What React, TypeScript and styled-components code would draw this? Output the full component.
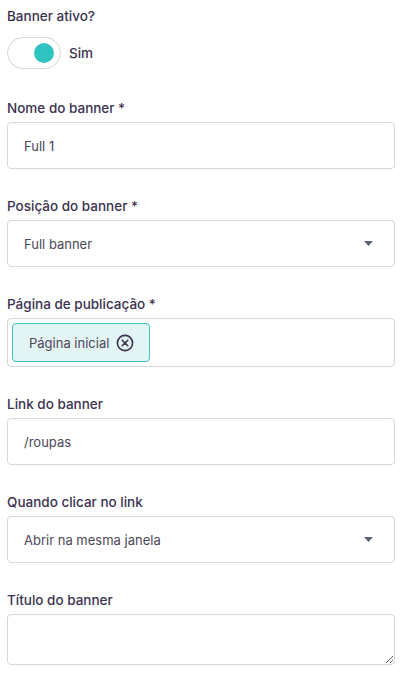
import React from "react";
import styled, { createGlobalStyle } from "styled-components";

const Global = createGlobalStyle`
  * { box-sizing: border-box; }
  html, body { margin: 0; padding: 0; background: #ffffff; }
  body { font-family: Inter, "Noto Sans", sans-serif; -webkit-font-smoothing: antialiased; }
`;

const Page = styled.form`
  display: flex;
  flex-direction: column;
  gap: 29px;
  padding: 8px 7px 8px 7px;
  width: 402px;
`;

const Field = styled.div`
  display: flex;
  flex-direction: column;
`;

const Label = styled.label`
  font-size: 13.5px;
  line-height: 16px;
  font-weight: 500;
  color: #3b3250;
  margin: 0 0 6px 0;
`;

const ToggleRow = styled.div`
  display: flex;
  align-items: center;
  gap: 8px;
  padding: 7px 0 2px 0;
`;

const Toggle = styled.div<{ $on: boolean }>`
  width: 54px;
  height: 32px;
  border: 1px solid #d6d6d9;
  border-radius: 16px;
  background: #ffffff;
  display: flex;
  align-items: center;
  justify-content: ${(p) => (p.$on ? "flex-end" : "flex-start")};
  padding: 0 6px;
`;

const Knob = styled.span`
  width: 20px;
  height: 20px;
  border-radius: 50%;
  background: #2fc4bf;
`;

const ToggleText = styled.span`
  font-size: 13.5px;
  font-weight: 500;
  color: #3b3250;
`;

const Box = styled.div`
  height: 47px;
  width: 388px;
  border: 1px solid #d5d7dc;
  border-radius: 4px;
  background: #fff;
  display: flex;
  align-items: center;
  justify-content: space-between;
  padding: 0 21px 0 16px;
  font-size: 13px;
  color: #4d4759;
`;

const TextInput = styled.input`
  height: 47px;
  width: 388px;
  border: 1px solid #d5d7dc;
  border-radius: 4px;
  background: #fff;
  padding: 0 16px;
  font-family: inherit;
  font-size: 13px;
  color: #4d4759;
  outline: none;
`;

const TextArea = styled.textarea`
  height: 51px;
  width: 388px;
  border: 1px solid #d5d7dc;
  border-radius: 4px;
  padding: 8px 16px;
  font-family: inherit;
  font-size: 13px;
  color: #4d4759;
  outline: none;
  display: block;
`;

const MultiBox = styled.div`
  height: 49px;
  width: 388px;
  border: 1px solid #d5d7dc;
  border-radius: 4px;
  display: flex;
  align-items: center;
  padding: 0 4px;
`;

const Chip = styled.div`
  height: 39px;
  display: flex;
  align-items: center;
  gap: 7px;
  padding: 0 15px 0 16px;
  background: #e3f4f5;
  border: 1px solid #3cc6c4;
  border-radius: 4px;
  font-size: 13px;
  color: #4d4759;
`;

const Arrow = () => (
  <svg width="9" height="5" viewBox="0 0 9 5">
    <path d="M0 0 H9 L4.5 5 Z" fill="#5b6275" />
  </svg>
);

const CloseCircle = () => (
  <svg width="18" height="18" viewBox="0 0 18 18" fill="none" stroke="#3b3350" strokeWidth="1.6" strokeLinecap="round">
    <circle cx="9" cy="9" r="7.6" />
    <path d="M6.2 6.2 L11.8 11.8 M11.8 6.2 L6.2 11.8" />
  </svg>
);

export default function App() {
  return (
    <>
      <Global />
      <Page>
        <Field>
          <Label>Banner ativo?</Label>
          <ToggleRow>
            <Toggle $on>
              <Knob />
            </Toggle>
            <ToggleText>Sim</ToggleText>
          </ToggleRow>
        </Field>
        <Field>
          <Label>Nome do banner *</Label>
          <TextInput defaultValue="Full 1" />
        </Field>
        <Field>
          <Label>Posição do banner *</Label>
          <Box>
            <span>Full banner</span>
            <Arrow />
          </Box>
        </Field>
        <Field>
          <Label>Página de publicação *</Label>
          <MultiBox>
            <Chip>
              <span>Página inicial</span>
              <CloseCircle />
            </Chip>
          </MultiBox>
        </Field>
        <Field>
          <Label>Link do banner</Label>
          <TextInput defaultValue="/roupas" />
        </Field>
        <Field>
          <Label>Quando clicar no link</Label>
          <Box>
            <span>Abrir na mesma janela</span>
            <Arrow />
          </Box>
        </Field>
        <Field>
          <Label>Título do banner</Label>
          <TextArea />
        </Field>
      </Page>
    </>
  );
}
